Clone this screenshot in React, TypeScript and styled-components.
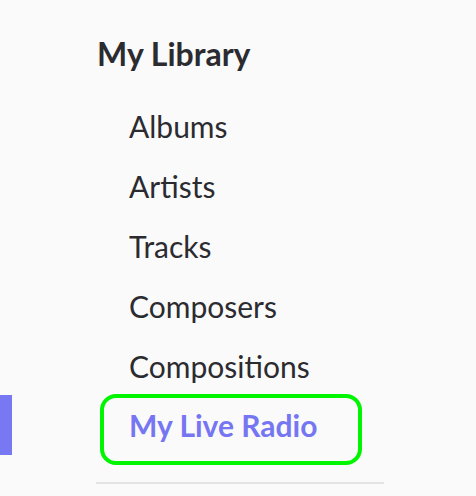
import React from "react";
import styled, { createGlobalStyle } from "styled-components";

const Global = createGlobalStyle`
  html, body { margin: 0; padding: 0; background: #fafafa; }
  body { font-family: Lato, "Noto Sans", sans-serif; }
`;

const Page = styled.div`
  width: 476px;
  height: 496px;
  overflow: hidden;
  display: grid;
  grid-template-columns: 12px 1fr;
  background: #fafafa;
`;

const Rail = styled.div`
  display: flex;
  flex-direction: column;
  padding-top: 395px;
`;

const Accent = styled.div`
  width: 12px;
  height: 60px;
  background: #7878f3;
`;

const Nav = styled.nav`
  padding: 34px 92px 0 84px;
  display: flex;
  flex-direction: column;
`;

const Title = styled.h2`
  margin: 0 0 0 1px;
  font-size: 32px;
  font-weight: 700;
  color: #2b2b30;
  line-height: 40px;
  height: 62px;
`;

const List = styled.ul`
  list-style: none;
  margin: 0;
  padding: 0;
  display: flex;
  flex-direction: column;
`;

const Item = styled.li`
  height: 60px;
  display: flex;
  align-items: center;
  padding-left: 33px;
  font-size: 30px;
  font-weight: 400;
  color: #2b2b30;
`;

const Focus = styled.div`
  margin: -2px 0 0 4px;
  width: 262px;
  height: 71px;
  box-sizing: border-box;
  border: 4px solid #00f500;
  border-radius: 16px;
  display: flex;
  align-items: flex-start;
  padding: 9px 0 0 25px;
  font-size: 30px;
  font-weight: 700;
  color: #7676f2;
`;

const Divider = styled.hr`
  margin: 17px 0 0 0;
  width: 288px;
  border: 0;
  height: 2px;
  background: #e4e4e4;
`;

export default function App() {
  const items = ["Albums", "Artists", "Tracks", "Composers", "Compositions"];
  return (
    <>
      <Global />
      <Page>
        <Rail>
          <Accent />
        </Rail>
        <Nav>
          <Title>My Library</Title>
          <List>
            {items.map((i) => (
              <Item key={i}>{i}</Item>
            ))}
          </List>
          <Focus>My Live Radio</Focus>
          <Divider />
        </Nav>
      </Page>
    </>
  );
}
